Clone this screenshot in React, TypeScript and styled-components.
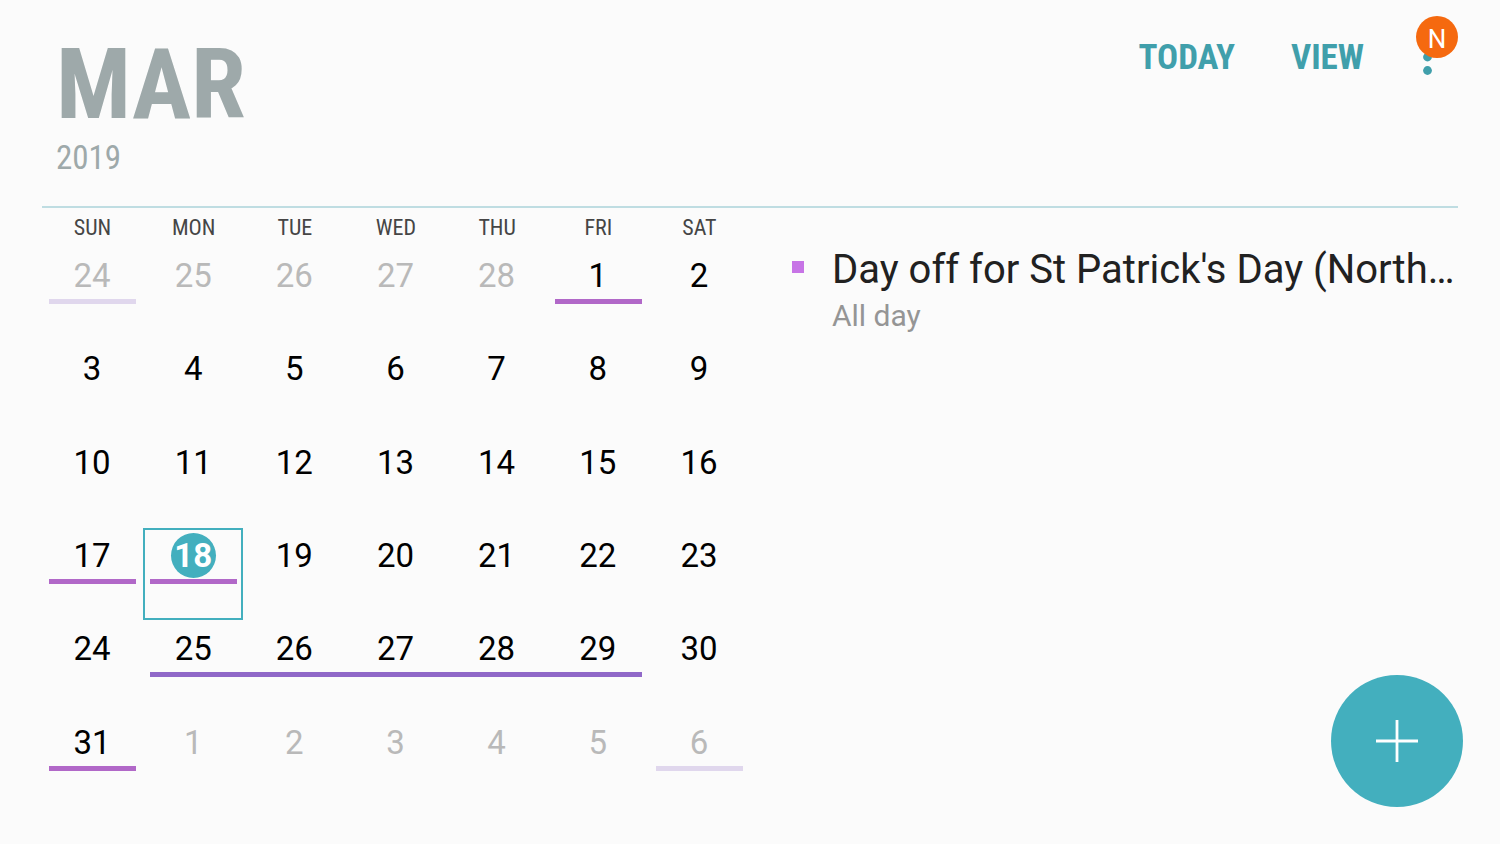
import React from "react";
import styled, { createGlobalStyle, css } from "styled-components";

const color = {
  page: "#fbfbfb",
  accent: "#43afbe",
  action: "#409fab",
  heading: "#9ea9aa",
  rule: "#bfdde2",
  weekday: "#454545",
  day: "#000000",
  muted: "#b9b9b9",
  title: "#212121",
  caption: "#959595",
  badge: "#f5690f",
};

const tones = {
  orchid: "#b168c8",
  violet: "#9068c8",
  faded: "#e0d7ed",
};

type Tone = keyof typeof tones;

const GlobalStyle = createGlobalStyle`
  *, *::before, *::after { box-sizing: border-box; }
  body {
    margin: 0;
    background: ${color.page};
    font-family: Roboto, "Liberation Sans", sans-serif;
  }
  button {
    margin: 0;
    padding: 0;
    border: 0;
    background: none;
    color: inherit;
    font: inherit;
    cursor: pointer;
  }
`;

const condensed = css`
  font-family: "Roboto Condensed", Roboto, "Liberation Sans", sans-serif;
`;

const Page = styled.div`
  display: flex;
  flex-direction: column;
  min-height: 100vh;
  padding: 0 42px 36px;
`;

const Header = styled.header`
  display: flex;
  justify-content: space-between;
  align-items: flex-start;
  padding: 32px 0 26px 14px;
  border-bottom: 2px solid ${color.rule};
`;

const Heading = styled.div`
  ${condensed}
  color: ${color.heading};
`;

const Month = styled.h1`
  margin: 0;
  font-size: 99px;
  line-height: 104px;
  font-weight: 700;
`;

const Year = styled.p`
  margin: 0;
  font-size: 33px;
  line-height: 44px;
`;

const Actions = styled.nav`
  display: flex;
  align-items: center;
  gap: 56px;
  padding-top: 4px;
`;

const TextAction = styled.button`
  ${condensed}
  color: ${color.action};
  font-size: 35px;
  line-height: 44px;
  font-weight: 700;
`;

const MoreButton = styled.button`
  position: relative;
  display: flex;
  align-items: center;
  width: 38px;
  height: 44px;
  padding-left: 2px;
`;

const Badge = styled.span`
  position: absolute;
  right: 0;
  top: -20px;
  width: 42px;
  height: 42px;
  border-radius: 50%;
  background: ${color.badge};
  color: #ffffff;
  font-size: 26px;
  line-height: 46px;
  text-align: center;
`;

const Main = styled.main`
  flex: 1;
  display: grid;
  grid-template-columns: minmax(0, 1fr) minmax(0, 1fr);
`;

const Calendar = styled.table`
  display: flex;
  flex-direction: column;
`;

const WeekRow = styled.tr`
  display: grid;
  grid-template-columns: repeat(7, minmax(0, 1fr));
`;

const Weekday = styled.th`
  ${condensed}
  padding: 0;
  color: ${color.weekday};
  font-size: 22px;
  line-height: 40px;
  font-weight: 400;
`;

const Weeks = styled.tbody`
  flex: 1;
  display: grid;
  grid-template-rows: repeat(6, minmax(64px, 1fr));
`;

const DayCell = styled.td<{ $selected: boolean }>`
  display: flex;
  margin: 0 1px 1px 0;
  padding: 0;
  box-shadow: ${(p) => (p.$selected ? `inset 0 0 0 2px ${color.accent}` : "none")};
`;

const DayButton = styled.button<{ $muted: boolean }>`
  flex: 1;
  display: flex;
  flex-direction: column;
  align-items: center;
  gap: 1px;
  padding-top: 5px;
  color: ${(p) => (p.$muted ? color.muted : color.day)};
  font-size: 33px;
  line-height: 45px;
`;

const DayNumber = styled.span<{ $today: boolean }>`
  width: 45px;
  height: 45px;
  border-radius: 50%;
  text-align: center;
  ${(p) =>
    p.$today &&
    css`
      background: ${color.accent};
      color: #ffffff;
      font-weight: 700;
    `}
`;

const EventBar = styled.span<{ $tone: Tone; $fromLeft: boolean; $toRight: boolean }>`
  align-self: stretch;
  height: 5px;
  margin-left: ${(p) => (p.$fromLeft ? "0" : "7px")};
  margin-right: ${(p) => (p.$toRight ? "-1px" : "6px")};
  background: ${(p) => tones[p.$tone]};
`;

const Agenda = styled.ul`
  margin: 0;
  padding: 38px 0 0 42px;
  list-style: none;
`;

const AgendaItem = styled.li`
  display: flex;
  gap: 28px;
`;

const Marker = styled.span`
  flex: none;
  width: 12px;
  height: 12px;
  margin-top: 15px;
  background: #c774e6;
`;

const AgendaText = styled.div`
  flex: 1;
  min-width: 0;
`;

const AgendaTitle = styled.h2`
  margin: 0;
  overflow: hidden;
  text-overflow: ellipsis;
  white-space: nowrap;
  color: ${color.title};
  font-size: 40px;
  line-height: 48px;
  font-weight: 400;
`;

const AgendaTime = styled.p`
  margin: 0;
  color: ${color.caption};
  font-size: 30px;
  line-height: 44px;
`;

const AddButton = styled.button`
  position: fixed;
  right: 37px;
  bottom: 37px;
  display: grid;
  place-items: center;
  width: 132px;
  height: 132px;
  border-radius: 50%;
  background: ${color.accent};
`;

type Day = {
  n: number;
  muted?: boolean;
  today?: boolean;
  bar?: Tone;
  fromLeft?: boolean;
  toRight?: boolean;
};

const weekdays = ["SUN", "MON", "TUE", "WED", "THU", "FRI", "SAT"];

const bars: Record<number, Omit<Day, "n">> = {
  1: { bar: "orchid" },
  17: { bar: "orchid" },
  18: { bar: "orchid", today: true },
  25: { bar: "violet", toRight: true },
  26: { bar: "violet", fromLeft: true, toRight: true },
  27: { bar: "violet", fromLeft: true, toRight: true },
  28: { bar: "violet", fromLeft: true, toRight: true },
  29: { bar: "violet", fromLeft: true },
  31: { bar: "orchid" },
};

const days: Day[] = [
  ...[24, 25, 26, 27, 28].map((n): Day => ({ n, muted: true, bar: n === 24 ? "faded" : undefined })),
  ...Array.from({ length: 31 }, (_, i): Day => ({ n: i + 1, ...bars[i + 1] })),
  ...[1, 2, 3, 4, 5, 6].map((n): Day => ({ n, muted: true, bar: n === 6 ? "faded" : undefined })),
];

const weeks = Array.from({ length: 6 }, (_, i) => days.slice(i * 7, i * 7 + 7));

export default function App() {
  return (
    <>
      <GlobalStyle />
      <Page>
        <Header>
          <Heading>
            <Month>MAR</Month>
            <Year>2019</Year>
          </Heading>
          <Actions>
            <TextAction type="button">TODAY</TextAction>
            <TextAction type="button">VIEW</TextAction>
            <MoreButton type="button" aria-label="More options">
              <svg width="10" height="38" viewBox="0 0 10 38" fill={color.action} aria-hidden="true">
                <circle cx="5.5" cy="4" r="4.4" />
                <circle cx="5.5" cy="18" r="4.4" />
                <circle cx="5.5" cy="31.5" r="4.4" />
              </svg>
              <Badge>N</Badge>
            </MoreButton>
          </Actions>
        </Header>
        <Main>
          <Calendar>
            <thead>
              <WeekRow>
                {weekdays.map((name) => (
                  <Weekday key={name} scope="col">
                    {name}
                  </Weekday>
                ))}
              </WeekRow>
            </thead>
            <Weeks>
              {weeks.map((week, w) => (
                <WeekRow key={w}>
                  {week.map((d) => (
                    <DayCell key={d.n} $selected={!!d.today}>
                      <DayButton type="button" $muted={!!d.muted}>
                        <DayNumber $today={!!d.today}>{d.n}</DayNumber>
                        {d.bar && <EventBar $tone={d.bar} $fromLeft={!!d.fromLeft} $toRight={!!d.toRight} />}
                      </DayButton>
                    </DayCell>
                  ))}
                </WeekRow>
              ))}
            </Weeks>
          </Calendar>
          <Agenda>
            <AgendaItem>
              <Marker />
              <AgendaText>
                <AgendaTitle>Day off for St Patrick's Day (Northern Ireland)</AgendaTitle>
                <AgendaTime>All day</AgendaTime>
              </AgendaText>
            </AgendaItem>
          </Agenda>
        </Main>
        <AddButton type="button" aria-label="Add event">
          <svg width="44" height="44" viewBox="0 0 44 44" stroke="#ffffff" strokeWidth="2.8" aria-hidden="true">
            <path d="M22 1v42M1 22h42" />
          </svg>
        </AddButton>
      </Page>
    </>
  );
}
